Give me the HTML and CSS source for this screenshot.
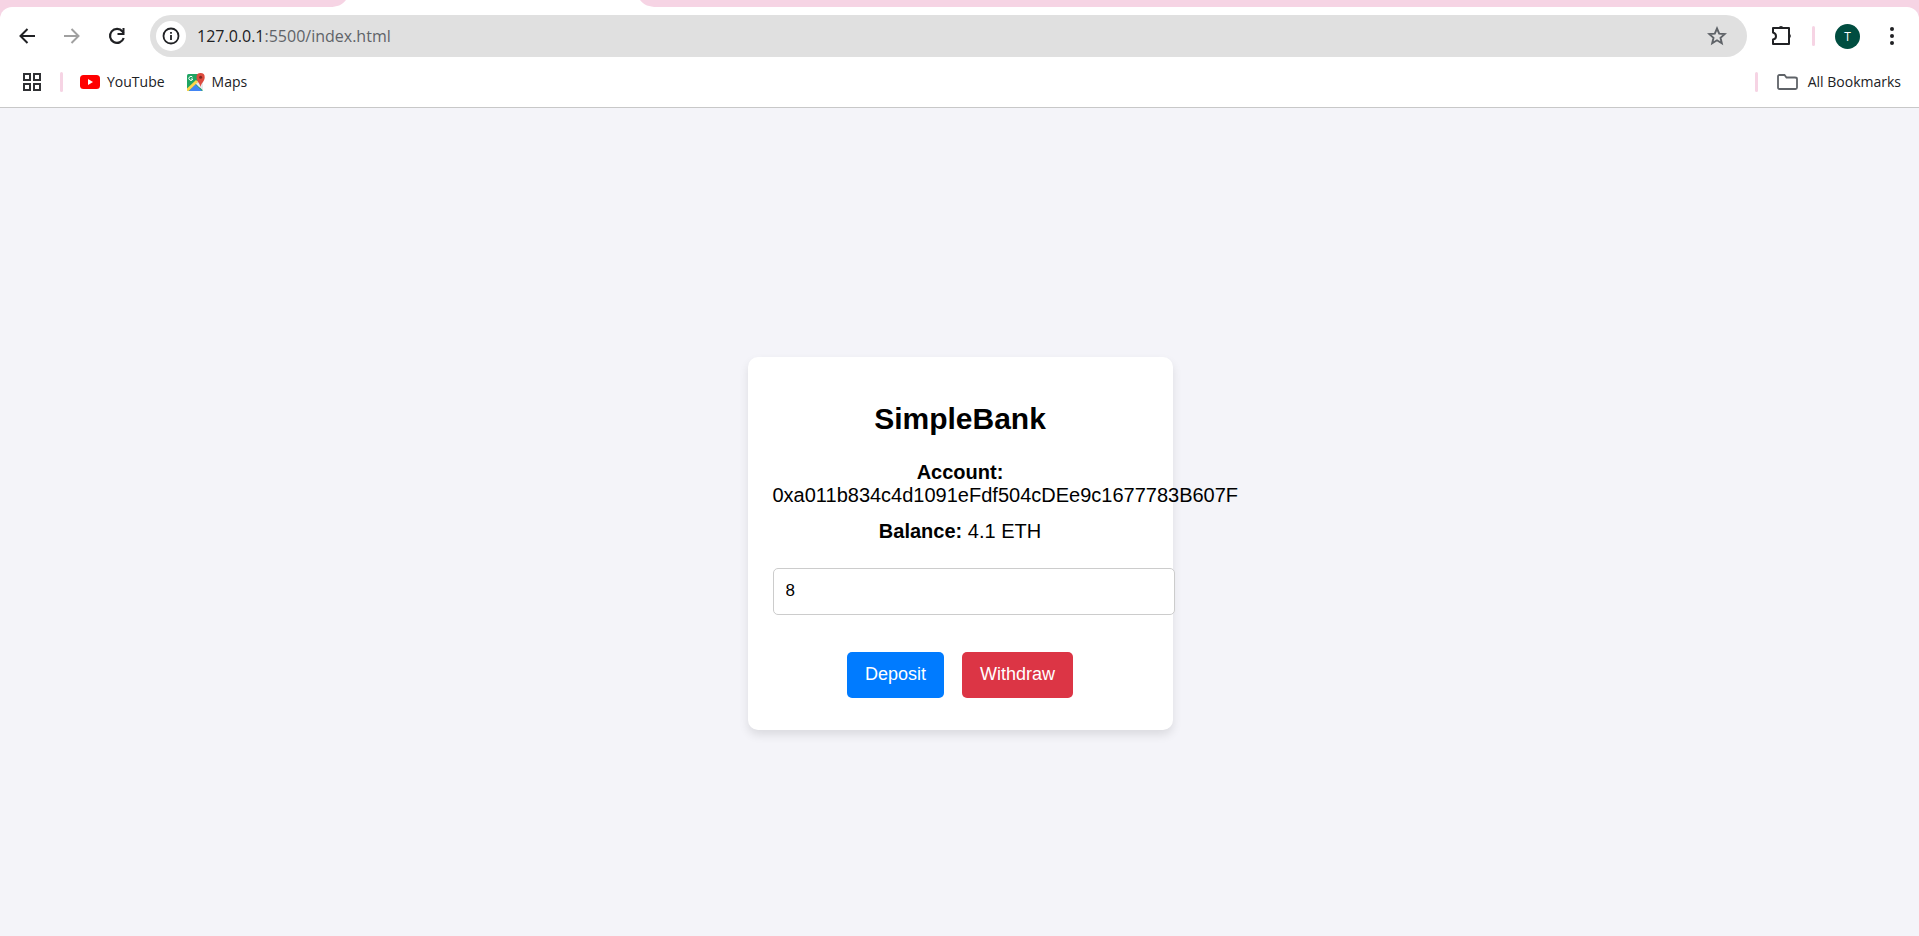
FILE: index.html
```html
<!DOCTYPE html>
<html lang="en">
<head>
<meta charset="utf-8">
<title>SimpleBank</title>
<link rel="stylesheet" href="styles.css">
</head>
<body>
<header class="browser">
  <div class="tabstrip">
    <svg class="active-tab" width="327" height="7" viewBox="0 0 327 7" aria-hidden="true"><path d="M0 7C7 7 12 5 16 0H310C314 5 319 7 327 7Z" fill="#fff"/></svg>
  </div>
  <div class="chrome">
    <div class="toolbar">
      <nav class="nav">
        <button class="icon-btn" type="button" aria-label="Back"><svg width="24" height="24" viewBox="0 0 24 24"><path d="M20 12H6M12.500 5L5.500 12L12.500 19" fill="none" stroke="#202124" stroke-width="2"/></svg></button>
        <button class="icon-btn" type="button" aria-label="Forward"><svg width="24" height="24" viewBox="0 0 24 24"><path d="M4 12H18M11.500 5L18.500 12L11.500 19" fill="none" stroke="#a0a0a0" stroke-width="2"/></svg></button>
        <button class="icon-btn" type="button" aria-label="Reload"><svg width="24" height="24" viewBox="0 0 24 24"><path d="M18.700 14A7 7 0 1 1 17.500 7.500L18.500 9" fill="none" stroke="#202124" stroke-width="2.200"/><path d="M19.500 4V11H12.500V9H17.500V4Z" fill="#202124"/></svg></button>
      </nav>
      <div class="omnibox">
        <button class="site-info" type="button" aria-label="Site information"><svg width="20" height="20" viewBox="0 0 20 20"><circle cx="10" cy="10" r="7.500" fill="none" stroke="#202124" stroke-width="1.800"/><path d="M9.100 9H10.900V14H9.100ZM9.100 6H10.900V7.800H9.100Z" fill="#202124"/></svg></button>
        <div class="url"><span class="host">127.0.0.1</span>:5500/index.html</div>
        <button class="star" type="button" aria-label="Bookmark"><svg width="20" height="20" viewBox="0 0 20 20"><path d="M10 2.500L12.200 7.600L17.700 8.100L13.500 11.800L14.800 17.200L10 14.300L5.200 17.200L6.500 11.800L2.300 8.100L7.800 7.600Z" fill="none" stroke="#5f6368" stroke-width="1.900"/></svg></button>
      </div>
      <div class="actions">
        <button class="icon-btn" type="button" aria-label="Extensions"><svg width="24" height="24" viewBox="0 0 24 24"><path d="M4 4H20V20H4V15.500C8 15 8 9.500 4 8.500Z" fill="none" stroke="#202124" stroke-width="2" stroke-linejoin="round"/><path d="M9.500 4A2.600 2.600 0 0 1 14.500 4ZM20 9.500A2.600 2.600 0 0 1 20 14.500Z" fill="#202124"/></svg></button>
        <span class="divider"></span>
        <button class="avatar" type="button">T</button>
        <button class="icon-btn" type="button" aria-label="Menu"><svg width="24" height="24" viewBox="0 0 24 24" fill="#202124"><circle cx="12" cy="5" r="2"/><circle cx="12" cy="12" r="2"/><circle cx="12" cy="19" r="2"/></svg></button>
      </div>
    </div>
    <div class="bookmarks">
      <button class="apps" type="button" aria-label="Apps"><svg width="18" height="18" viewBox="0 0 18 18" fill="none" stroke="#303134" stroke-width="2"><path d="M1 1H7V7H1ZM11 1H17V7H11ZM1 11H7V17H1ZM11 11H17V17H11Z"/></svg></button>
      <span class="divider"></span>
      <a class="bookmark youtube" href="#"><svg width="20" height="14" viewBox="0 0 20 14"><rect width="20" height="14" rx="3.500" fill="#f00"/><path d="M8 4L13 7L8 10Z" fill="#fff"/></svg>YouTube</a>
      <a class="bookmark maps" href="#"><svg width="18" height="18" viewBox="0 0 18 18"><rect y="1" width="16" height="17" rx="1.500" fill="#1fa463"/><path d="M8 10L16 3V16L12 14Z" fill="#dadce0"/><path d="M2 18L8 11L15 18Z" fill="#4285f4"/><path d="M0 15.500L9 7L11 9L1.500 18H0Z" fill="#ffd54a"/><path d="M9 10.500L16 17.500V10Z" fill="#e8eaed"/><path d="M13.500 14C13 10 9.500 8.500 9.500 4.200A4 4 0 0 1 17.700 4.200C17.700 8.500 14 10 13.500 14Z" fill="#dd4b3e"/><circle cx="13.600" cy="4.300" r="1.500" fill="#7d2720"/><path d="M5.500 4.200A2 2 0 1 0 5.800 6H4" fill="none" stroke="#fff" stroke-width="1"/></svg>Maps</a>
      <span class="divider push"></span>
      <a class="bookmark all" href="#"><svg width="21" height="16" viewBox="0 0 21 16"><path d="M1 2.500Q1 1 2.500 1H7.500L9.500 3.500H18Q20 3.500 20 5V13.500Q20 15 18.500 15H2.500Q1 15 1 13.500Z" fill="none" stroke="#5f6368" stroke-width="1.800"/></svg>All Bookmarks</a>
    </div>
  </div>
</header>
<main class="page">
  <section class="card">
    <h1 class="title">SimpleBank</h1>
    <p class="info"><strong>Account:</strong> <span>0xa011b834c4d1091eFdf504cDEe9c1677783B607F</span></p>
    <p class="info"><strong>Balance:</strong> <span>4.1 ETH</span></p>
    <input class="amount" type="text" value="8" aria-label="Amount">
    <div class="buttons">
      <button class="btn deposit" type="button">Deposit</button>
      <button class="btn withdraw" type="button">Withdraw</button>
    </div>
  </section>
</main>
</body>
</html>
```

FILE: styles.css
```css
* { box-sizing: border-box; }
body {
  margin: 0;
  min-height: 100vh;
  display: flex;
  flex-direction: column;
  background: #f4f4f9;
  font-family: "Liberation Sans", Arial, sans-serif;
  color: #000;
}
button { border: 0; padding: 0; background: none; font: inherit; cursor: pointer; }
svg { display: block; flex: none; }

.browser { background: #f6d4e4; font-family: "Open Sans", "Noto Sans", sans-serif; color: #202124; }
.tabstrip { height: 7px; padding-left: 330px; }
.chrome { background: #fff; border-radius: 12px 12px 0 0; border-bottom: 1px solid #c8c8c8; }
.toolbar { display: flex; align-items: center; padding: 8px 15px 0; }
.nav { display: flex; gap: 21px; margin-right: 21px; }
.icon-btn { width: 24px; height: 24px; }
.omnibox {
  flex: 1;
  display: flex;
  align-items: center;
  height: 42px;
  padding: 0 20px 0 6px;
  border-radius: 21px;
  background: #e0e0e0;
}
.site-info { display: grid; place-items: center; width: 30px; height: 30px; border-radius: 50%; background: #fff; }
.url { flex: 1; margin-left: 11px; font-size: 16px; color: #5f6368; }
.host { color: #202124; }
.actions { display: flex; align-items: center; margin-left: 22px; }
.divider { width: 3px; height: 20px; border-radius: 2px; background: #f6d4e4; }
.actions .divider { margin: 0 20px 0 19px; }
.avatar {
  width: 25px;
  height: 25px;
  margin-right: 20px;
  border-radius: 50%;
  background: #004d40;
  color: #fff;
  font-size: 12px;
}
.bookmarks { display: flex; align-items: center; height: 50px; padding: 0 18px 0 23px; }
.apps { margin-right: 19px; }
.bookmark { display: flex; align-items: center; gap: 7px; color: inherit; font-size: 14px; line-height: 18px; text-decoration: none; }
.youtube { margin-left: 17px; }
.maps { margin-left: 22px; }
.push { margin-left: auto; }
.all { margin-left: 19px; gap: 10px; }

.page { flex: 1; display: flex; justify-content: center; align-items: center; padding: 42px 0 0 1px; }
.card {
  width: 425px;
  padding: 20px 25px 32px;
  border-radius: 10px;
  background: #fff;
  box-shadow: 0 5px 10px rgba(0, 0, 0, 0.1);
  font-size: 20px;
  line-height: 23px;
  text-align: center;
}
.title { margin: 25px 0; font-size: 30px; line-height: 34px; }
.info { margin: 0 0 13px; }
.amount {
  display: block;
  width: 402px;
  height: 47px;
  margin-top: 25px;
  padding: 0 12px;
  border: 1px solid #ccc;
  border-radius: 5px;
  background: #fff;
  font: 17px "Liberation Sans", Arial, sans-serif;
}
.buttons { display: flex; justify-content: center; gap: 18px; margin-top: 37px; }
.btn { height: 46px; padding: 0 18px; border-radius: 5px; color: #fff; font-size: 18px; }
.deposit { background: #007bff; }
.withdraw { background: #dc3545; }
```
